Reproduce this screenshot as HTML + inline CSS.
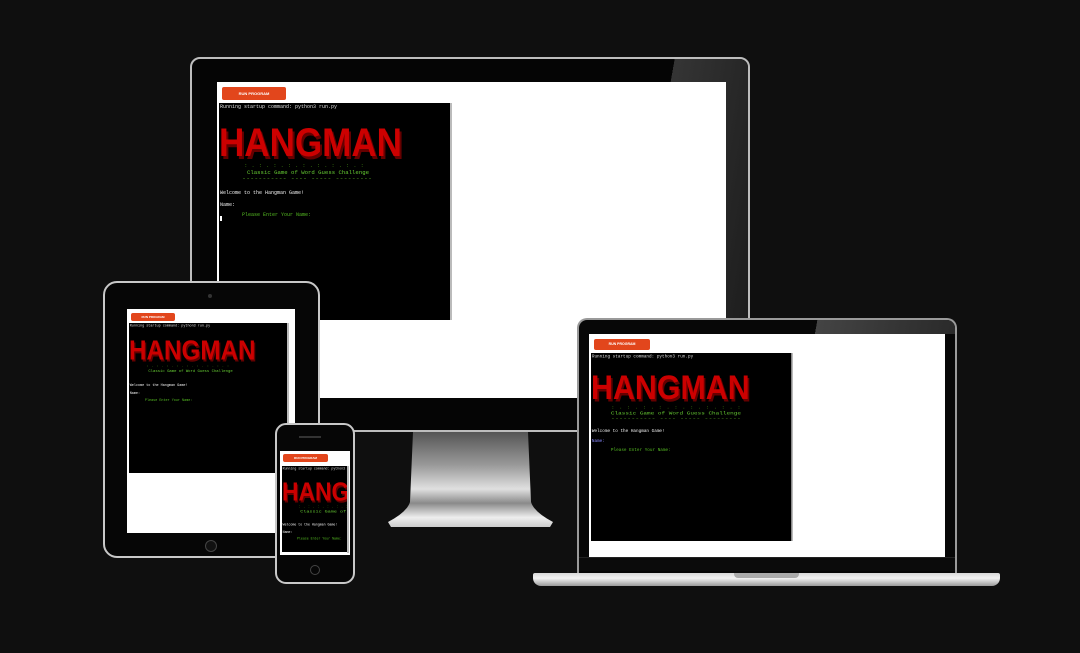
<!DOCTYPE html>
<html><head><meta charset="utf-8">
<style>
*{margin:0;padding:0;box-sizing:border-box}
body{width:1080px;height:653px;background:#0f0f0f;position:relative;overflow:hidden;font-family:"Liberation Sans",sans-serif}
.a{position:absolute}
.btn{position:absolute;background:#e2461c;border-radius:2px;color:#fff;font-weight:bold;text-align:center}
</style></head><body>

<!-- MONITOR -->
<div class="a" style="left:190px;top:57px;width:560px;height:375px;border-radius:10px;background:#050505;border:2px solid #bdbdbd"></div>
<div class="a" style="left:640px;top:59px;width:108px;height:371px;background:linear-gradient(100deg,transparent 0 20%,#3a3a3a 20%,#1c1c1c 100%);border-radius:0 9px 9px 0;opacity:.9"></div>
<div class="a" style="left:217px;top:82px;width:509px;height:316px;background:#fff"></div>
<div class="btn" style="left:222px;top:87px;width:64px;height:13px;font-size:4px;line-height:13px">RUN PROGRAM</div>
<svg class="a" style="left:219px;top:103px" width="233" height="217" viewBox="0 0 233 217">
<rect width="233" height="217" fill="#000"/><rect x="231" width="2" height="217" fill="#bbb"/>
<g font-family="Liberation Mono,monospace" font-size="5">
<text x="1" y="5" fill="#ddd">Running startup command: python3 run.py</text>
<text x="2" y="56" fill="#600" font-weight="bold" font-size="40" textLength="183" lengthAdjust="spacingAndGlyphs" font-family="Liberation Sans,sans-serif">HANGMAN</text>
<text x="0" y="53" fill="#c00" font-weight="bold" font-size="40" textLength="183" lengthAdjust="spacingAndGlyphs" font-family="Liberation Sans,sans-serif">HANGMAN</text>
<text x="25" y="64" fill="#3a7a10" textLength="120" lengthAdjust="spacingAndGlyphs">: . : . : . : . : . : . : . : . :</text>
<text x="28" y="71" fill="#6c3" textLength="122" lengthAdjust="spacingAndGlyphs">Classic Game of Word Guess Challenge</text>
<text x="23" y="77" fill="#5a2" textLength="130" lengthAdjust="spacingAndGlyphs">----------- ---- ----- ---------</text>
<text x="1" y="91" fill="#eee">Welcome to the Hangman Game!</text>
<text x="1" y="103" fill="#eee">Name:</text>
<text x="23" y="113" fill="#5b2">Please Enter Your Name:</text>
</g><rect x="1" y="113" width="2" height="5" fill="#fff"/>
</svg>
<!-- stand -->
<svg class="a" style="left:388px;top:432px" width="166" height="98" viewBox="0 0 166 98">
<defs><linearGradient id="st" x1="0" y1="0" x2="0" y2="1"><stop offset="0" stop-color="#555"/><stop offset=".35" stop-color="#9a9a9a"/><stop offset=".6" stop-color="#e0e0e0"/><stop offset=".75" stop-color="#8a8a8a"/><stop offset=".9" stop-color="#eee"/><stop offset="1" stop-color="#ccc"/></linearGradient></defs>
<path d="M25 0 L140 0 L143 70 Q146 80 165 90 L162 95 L3 95 L0 90 Q19 80 22 70 Z" fill="url(#st)"/>
</svg>

<!-- TABLET -->
<div class="a" style="left:103px;top:281px;width:217px;height:277px;border-radius:14px;background:#060606;border:2px solid #c8c8c8"></div>
<div class="a" style="left:208px;top:294px;width:4px;height:4px;border-radius:50%;background:#333"></div>
<div class="a" style="left:205px;top:540px;width:12px;height:12px;border-radius:50%;border:1px solid #444;background:#111"></div>
<div class="a" style="left:127px;top:309px;width:168px;height:224px;background:#fff"></div>
<div class="btn" style="left:131px;top:313px;width:44px;height:8px;font-size:3px;line-height:8px">RUN PROGRAM</div>
<svg class="a" style="left:129px;top:323px" width="160" height="150" viewBox="0 0 233 217" preserveAspectRatio="xMinYMin slice">
<rect width="233" height="217" fill="#000"/>
<g font-family="Liberation Mono,monospace" font-size="5">
<text x="1" y="5" fill="#ddd">Running startup command: python3 run.py</text>
<text x="2" y="56" fill="#600" font-weight="bold" font-size="40" textLength="183" lengthAdjust="spacingAndGlyphs" font-family="Liberation Sans,sans-serif">HANGMAN</text>
<text x="0" y="53" fill="#c00" font-weight="bold" font-size="40" textLength="183" lengthAdjust="spacingAndGlyphs" font-family="Liberation Sans,sans-serif">HANGMAN</text>
<text x="25" y="64" fill="#3a7a10" textLength="120" lengthAdjust="spacingAndGlyphs">: . : . : . : . : . : . : . : . :</text>
<text x="28" y="71" fill="#6c3" textLength="122" lengthAdjust="spacingAndGlyphs">Classic Game of Word Guess Challenge</text>
<text x="1" y="91" fill="#eee">Welcome to the Hangman Game!</text>
<text x="1" y="103" fill="#eee">Name:</text>
<text x="23" y="113" fill="#5b2">Please Enter Your Name:</text>
</g></svg>
<div class="a" style="left:287px;top:323px;width:2px;height:150px;background:#bbb"></div>

<!-- PHONE -->
<div class="a" style="left:275px;top:423px;width:80px;height:161px;border-radius:11px;background:#060606;border:2px solid #c8c8c8"></div>
<div class="a" style="left:299px;top:436px;width:22px;height:2px;background:#333"></div>
<div class="a" style="left:310px;top:565px;width:10px;height:10px;border-radius:50%;border:1px solid #444"></div>
<div class="a" style="left:280px;top:451px;width:70px;height:104px;background:#fff"></div>
<div class="btn" style="left:283px;top:454px;width:45px;height:8px;font-size:3px;line-height:8px">RUN PROGRAM</div>
<svg class="a" style="left:282px;top:466px" width="65" height="86" viewBox="0 0 100 132" preserveAspectRatio="xMinYMin slice">
<rect width="233" height="217" fill="#000"/>
<g font-family="Liberation Mono,monospace" font-size="5">
<text x="1" y="5" fill="#ddd">Running startup command: python3</text>
<text x="2" y="56" fill="#600" font-weight="bold" font-size="40" textLength="183" lengthAdjust="spacingAndGlyphs" font-family="Liberation Sans,sans-serif">HANGMAN</text>
<text x="0" y="53" fill="#c00" font-weight="bold" font-size="40" textLength="183" lengthAdjust="spacingAndGlyphs" font-family="Liberation Sans,sans-serif">HANGMAN</text>
<text x="25" y="64" fill="#3a7a10" textLength="120" lengthAdjust="spacingAndGlyphs">: . : . : . : . : . : . : . : . :</text>
<text x="28" y="71" fill="#6c3" textLength="122" lengthAdjust="spacingAndGlyphs">Classic Game of Word Guess</text>
<text x="1" y="91" fill="#eee">Welcome to the Hangman Game!</text>
<text x="1" y="103" fill="#eee">Name:</text>
<text x="23" y="113" fill="#5b2">Please Enter Your Name:</text>
</g></svg>
<div class="a" style="left:347px;top:466px;width:2px;height:87px;background:#bbb"></div>

<!-- LAPTOP -->
<div class="a" style="left:577px;top:318px;width:380px;height:256px;border-radius:10px 10px 0 0;background:#070707;border:2px solid #9a9a9a;border-bottom:none"></div>
<div class="a" style="left:810px;top:320px;width:145px;height:14px;background:linear-gradient(100deg,transparent 0 5%,#444 5%,#2a2a2a);border-radius:0 8px 0 0"></div>
<div class="a" style="left:589px;top:334px;width:356px;height:223px;background:#fff"></div>
<div class="btn" style="left:594px;top:339px;width:56px;height:11px;font-size:3.5px;line-height:11px">RUN PROGRAM</div>
<svg class="a" style="left:591px;top:353px" width="202" height="188" viewBox="0 0 233 217" preserveAspectRatio="none">
<rect width="233" height="217" fill="#000"/><rect x="231" width="2" height="217" fill="#bbb"/>
<g font-family="Liberation Mono,monospace" font-size="5">
<text x="1" y="5" fill="#ddd">Running startup command: python3 run.py</text>
<text x="2" y="56" fill="#600" font-weight="bold" font-size="40" textLength="183" lengthAdjust="spacingAndGlyphs" font-family="Liberation Sans,sans-serif">HANGMAN</text>
<text x="0" y="53" fill="#c00" font-weight="bold" font-size="40" textLength="183" lengthAdjust="spacingAndGlyphs" font-family="Liberation Sans,sans-serif">HANGMAN</text>
<text x="23" y="64" fill="#3a7a10" textLength="150" lengthAdjust="spacingAndGlyphs">: . : . : . : . : . : . : . : . :</text>
<text x="23" y="71" fill="#6c3" textLength="150" lengthAdjust="spacingAndGlyphs">Classic Game of Word Guess Challenge</text>
<text x="23" y="77" fill="#5a2" textLength="150" lengthAdjust="spacingAndGlyphs">----------- ---- ----- ---------</text>
<text x="1" y="91" fill="#eee">Welcome to the Hangman Game!</text>
<text x="1" y="103" fill="#88f">Name:</text>
<text x="23" y="113" fill="#5b2">Please Enter Your Name:</text>
</g></svg>
<div class="a" style="left:579px;top:557px;width:376px;height:14px;background:#0b0b0b;border-top:1px solid #222"></div>
<div class="a" style="left:533px;top:573px;width:467px;height:13px;border-radius:2px 2px 8px 8px;background:linear-gradient(#d8d8d8,#f2f2f2 40%,#9a9a9a)"></div>
<div class="a" style="left:734px;top:573px;width:65px;height:5px;border-radius:0 0 4px 4px;background:#aaa"></div>
</body></html>
